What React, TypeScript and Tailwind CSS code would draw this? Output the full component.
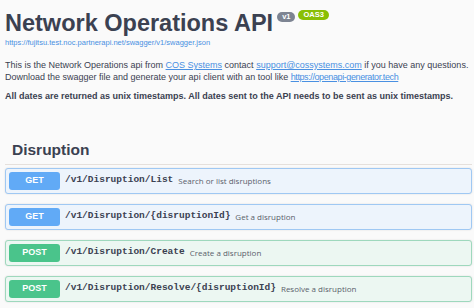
import React from "react";

const rows = [
  { method: "GET", path: "/v1/Disruption/List", summary: "Search or list disruptions" },
  { method: "GET", path: "/v1/Disruption/{disruptionId}", summary: "Get a disruption" },
  { method: "POST", path: "/v1/Disruption/Create", summary: "Create a disruption" },
  { method: "POST", path: "/v1/Disruption/Resolve/{disruptionId}", summary: "Resolve a disruption" },
];

function Row({ method, path, summary }: { method: string; path: string; summary: string }) {
  const isGet = method === "GET";
  return (
    <div
      className={
        isGet
          ? "flex items-center h-[26px] rounded-[3px] border border-[#9fc8f3] bg-[#edf4fc] shadow-[0_0_2px_rgba(0,0,0,0.12)] pl-[3px]"
          : "flex items-center h-[26px] rounded-[3px] border border-[#9ed8bd] bg-[#ecf7f2] shadow-[0_0_2px_rgba(0,0,0,0.12)] pl-[3px]"
      }
    >
      <div
        className={
          isGet
            ? "w-[51px] h-[18px] rounded-[3px] bg-[#61aaf6] text-white font-bold text-[9px] flex items-center justify-center"
            : "w-[51px] h-[18px] rounded-[3px] bg-[#4ac48b] text-white font-bold text-[9px] flex items-center justify-center"
        }
        style={{ fontFamily: "'Liberation Sans', Arial, sans-serif" }}
      >
        {method}
      </div>
      <span
        className="ml-[5px] text-[9.5px] font-bold text-[#3b4151] whitespace-nowrap"
        style={{ fontFamily: "'Liberation Mono', 'DejaVu Sans Mono', monospace" }}
      >
        {path}
      </span>
      <span
        className="ml-[5px] text-[8px] text-[#5a5f6b] whitespace-nowrap"
        style={{ fontFamily: "'Open Sans', 'Liberation Sans', sans-serif" }}
      >
        {summary}
      </span>
    </div>
  );
}

export default function App() {
  return (
    <div
      className="w-[474px] h-[308px] overflow-hidden bg-[#fafafa] text-[#3b4151] pl-[5px] pr-[2px]"
      style={{ fontFamily: "'Liberation Sans', Arial, sans-serif" }}
    >
      <div className="flex items-start pt-[12px]">
        <h1 className="text-[23.5px] leading-[23px] font-bold text-[#3b4151] whitespace-nowrap">Network Operations API</h1>
        <span className="ml-[4px] mt-[0px] h-[10px] px-[5px] rounded-full bg-[#7d8492] text-white text-[7.5px] font-bold leading-[10px]">
          v1
        </span>
        <span className="ml-[3px] mt-[-2px] h-[10px] px-[5px] rounded-full bg-[#89bf04] text-white text-[7.5px] font-bold leading-[10px]">
          OAS3
        </span>
      </div>
      <div className="mt-[3px] text-[7.5px] leading-[10px] text-[#4990e2] whitespace-nowrap">
        https://fujitsu.test.noc.partnerapi.net/swagger/v1/swagger.json
      </div>
      <div className="mt-[12px] text-[9px] leading-[11.5px] text-[#3b4151] whitespace-nowrap">
        <p>
          This is the Network Operations api from{" "}
          <span className="text-[#4990e2] underline">COS Systems</span> contact{" "}
          <span className="text-[#4990e2] underline">support@cossystems.com</span> if you have any questions.
        </p>
        <p>
          Download the swagger file and generate your api client with an tool like{" "}
          <span className="text-[#4990e2] underline tracking-[-0.4px]">https://openapi-generator.tech</span>
        </p>
        <p className="mt-[8px] font-bold text-[9px]">
          All dates are returned as unix timestamps. All dates sent to the API needs to be sent as unix timestamps.
        </p>
      </div>
      <div className="mt-[38px] pb-[5px] border-b border-[#e5e0dc]">
        <h2 className="text-[15.5px] leading-[18px] font-bold pl-[7px] text-[#3b4151]">Disruption</h2>
      </div>
      <div className="mt-[3px] flex flex-col gap-[10px]">
        {rows.map((r) => (
          <Row key={r.path} {...r} />
        ))}
      </div>
    </div>
  );
}
